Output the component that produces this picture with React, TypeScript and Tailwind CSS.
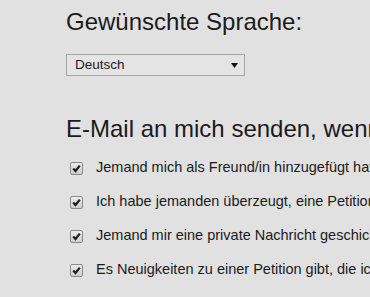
import React from "react";

// Notification options shown under the e-mail heading
const options: string[] = [
  "Jemand mich als Freund/in hinzugefügt hat",
  "Ich habe jemanden überzeugt, eine Petition zu unterschreiben",
  "Jemand mir eine private Nachricht geschickt hat",
  "Es Neuigkeiten zu einer Petition gibt, die ich unterschrieben habe",
];

const CheckBox: React.FC = () => (
  <span className="flex h-[13px] w-[13px] shrink-0 items-center justify-center rounded-[2px] border border-[#8a8a8a] bg-gradient-to-b from-[#ececec] to-[#cdcdcd]">
    <svg width="9" height="9" viewBox="0 0 9 9">
      <path d="M1.2 4.6 L3.5 7 L7.8 1.6" fill="none" stroke="#1c1c1c" strokeWidth="2.2" />
    </svg>
  </span>
);

const App: React.FC = () => {
  return (
    <div
      className="h-[297px] w-[370px] overflow-hidden bg-[#e1e1e1] text-[#1b1b1b]"
      style={{ fontFamily: '"Liberation Sans", Arial, sans-serif' }}
    >
      <div className="pl-[66px] pt-[6px]">
        <h2 className="whitespace-nowrap text-[24px] leading-8">Gewünschte Sprache:</h2>

        <div className="mt-4 flex h-[22px] w-[179px] items-center justify-between border border-[#a5a5a5] bg-[#e4e4e4] pl-[8px] pr-[6px] text-[13.5px]">
          <span>Deutsch</span>
          <svg width="7" height="5" viewBox="0 0 7 5">
            <path d="M0 0 H7 L3.5 5 Z" fill="#111" />
          </svg>
        </div>

        <h2 className="mt-[37px] whitespace-nowrap text-[24px] leading-8">
          E-Mail an mich senden, wenn ...
        </h2>

        <ul className="mt-[6px] flex flex-col">
          {options.map((label) => (
            <li key={label} className="flex h-[34px] items-center whitespace-nowrap pl-[4px]">
              <CheckBox />
              <span className="ml-[13px] text-[14.5px]">{label}</span>
            </li>
          ))}
        </ul>
      </div>
    </div>
  );
};

export default App;
